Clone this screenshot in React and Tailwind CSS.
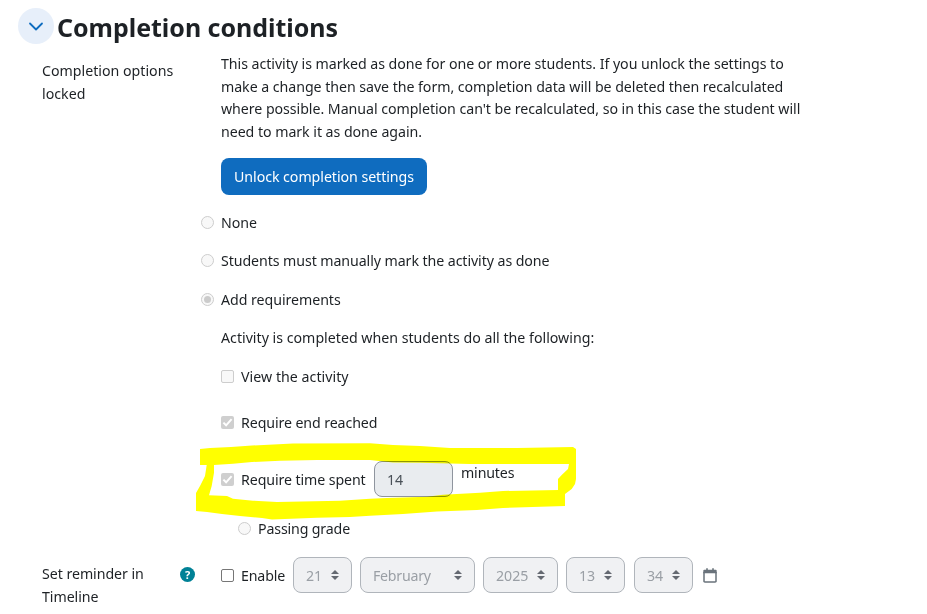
import React from 'react';

const dateSelects = [
  { label: '21', width: 'w-[59px]', space: 'mr-2' },
  { label: 'February', width: 'w-[115px]', space: 'mr-2', tight: true },
  { label: '2025', width: 'w-[75px]', space: 'mr-2' },
  { label: '13', width: 'w-[59px]', space: 'mr-[9px]' },
  { label: '34', width: 'w-[59px]', space: 'mr-2.5' },
];

const Radio = ({ checked }) => (
  <span className="w-[13px] h-[13px] shrink-0 rounded-full border border-[#cdcdcd] bg-[#f8f8f8] flex items-center justify-center">
    {checked && <span className="w-[7px] h-[7px] rounded-full bg-[#cbcbcb]" />}
  </span>
);

const Checkbox = ({ checked, enabled }) => {
  if (checked) {
    return (
      <span className="w-[13px] h-[13px] shrink-0 rounded-xs bg-[#cfcfcf]">
        <svg viewBox="0 0 13 13" className="w-full h-full" fill="none" stroke="#fff" strokeWidth="2">
          <path d="M2.4 6.6 5.1 9.3 10.6 3.2" />
        </svg>
      </span>
    );
  }
  return (
    <span
      className={`w-[13px] h-[13px] shrink-0 rounded-xs border ${
        enabled ? 'border-[#767676] bg-white' : 'border-[#cdcdcd] bg-[#f8f8f8]'
      }`}
    />
  );
};

const Select = ({ label, width, space, tight }) => (
  <div
    className={`${width} ${space} h-9 shrink-0 rounded-lg border border-[#b0b5bb] bg-[#f0f1f3] pl-3 pr-3 flex items-center justify-between text-[#9a9fa5]`}
  >
    <span className={tight ? 'pt-0.5 tracking-[-0.25px]' : 'pt-0.5'}>{label}</span>
    <svg width="8" height="10" viewBox="0 0 8 10" fill="#646971">
      <path d="M4 0 8 4H0zM4 10 0 6h8z" />
    </svg>
  </div>
);

// Freehand highlighter stroke around the time spent row
const Marker = () => (
  <svg
    className="absolute left-0 top-0 mix-blend-multiply pointer-events-none"
    width="927"
    height="614"
    viewBox="0 0 927 614"
    fill="#ffff00"
    fillRule="evenodd"
  >
    <path
      d="M200 449 210 448 231 447 252 445.5 293 443.5 370 443.3 393 445 420 446 450 448 517 448 573 447 576 449 576 479 575 484 571.7 489 565 494 565 506 503 508 477 510 437 511.5 403 514 370 515.7 350 517 317 517.7 272 519.5 262 518 240 516 222 514 207 512 196 511 196 493 200 486 205 476 206.7 465 200 465Z
      M214 465 233 463.7 252 462 280 460.7 317 460 370 460 393 462.5 420 462.7 470 464 569 464 568 469 561.7 475 558 479 558 490 503 491 480 492.7 443 494.7 427 496.7 387 498 370 498.7 340 500.7 277 502 253 500.7 233 498.7 227 496 209 495.3 211.7 486 214 472.7Z"
    />
  </svg>
);

const App = () => {
  return (
    <div className="relative w-[927px] h-[614px] overflow-hidden bg-white font-['Noto_Sans','Open_Sans',sans-serif] text-[14.2px] leading-[22.6px] tracking-[-0.05px] text-[#1d2125] whitespace-nowrap">
      {/* Section header */}
      <div className="flex items-center pt-2 pl-[18px]">
        <span className="w-9 h-9 rounded-full bg-[#e7effa] flex items-center justify-center">
          <svg width="16" height="10" viewBox="0 0 16 10" className="mt-0.5" fill="none" stroke="#0f6cbf" strokeWidth="1.8" strokeLinecap="round" strokeLinejoin="round">
            <path d="M2 1.5 8 7.5 14 1.5" />
          </svg>
        </span>
        <h3 className="ml-[3px] mt-0.5 text-[25px] leading-8 font-bold tracking-[-0.03px]">Completion conditions</h3>
      </div>

      {/* Locked completion options */}
      <div className="flex pl-[42px] pt-[9px]">
        <div className="w-[179px] shrink-0 pt-[7px] tracking-normal">
          Completion options
          <br />
          locked
        </div>
        <div>
          <p>
            This activity is marked as done for one or more students. If you unlock the settings to
            <br />
            make a change then save the form, completion data will be deleted then recalculated
            <br />
            where possible. Manual completion can't be recalculated, so in this case the student will
            <br />
            need to mark it as done again.
          </p>
          <button className="mt-[15px] h-[37px] w-[206px] rounded-lg bg-[#0f6cbf] text-white">
            Unlock completion settings
          </button>
        </div>
      </div>

      {/* Completion rules */}
      <div className="pl-[201px] pt-2">
        <div className="h-[38px] flex items-center gap-[7px]">
          <Radio />
          <span className="pt-0.5">None</span>
        </div>
        <div className="h-[39px] flex items-center gap-[7px]">
          <Radio />
          <span className="tracking-[-0.08px]">Students must manually mark the activity as done</span>
        </div>
        <div className="h-[38px] flex items-center gap-[7px]">
          <Radio checked />
          <span className="pt-0.5">Add requirements</span>
        </div>
        <div className="h-[39px] flex items-center pl-5 tracking-normal">
          Activity is completed when students do all the following:
        </div>
        <div className="h-[39px] flex items-center gap-[7px] pl-5">
          <Checkbox />
          <span className="tracking-[0.03px]">View the activity</span>
        </div>
        <div className="h-[53px] flex items-center gap-[7px] pl-5">
          <Checkbox checked />
          <span className="tracking-[-0.1px]">Require end reached</span>
        </div>
        <div className="h-[60px] flex items-center pl-5">
          <Checkbox checked />
          <span className="ml-[7px] w-[133px] pt-0.5 tracking-[-0.1px]">Require time spent</span>
          <div className="w-[79px] h-9 rounded-lg border border-[#8f959e] bg-[#e9ecef] pl-3 pt-0.5 flex items-center text-[#495057]">
            14
          </div>
          <span className="ml-2 mb-3 tracking-[-0.15px]">minutes</span>
        </div>
        <div className="h-[38px] flex items-center gap-[7px] pl-[37px]">
          <Radio />
          <span className="pt-0.5 tracking-[-0.15px]">Passing grade</span>
        </div>
      </div>

      {/* Timeline reminder */}
      <div className="flex pl-[42px] pt-2.5">
        <div className="w-[138px] pt-1.5">
          Set reminder in
          <br />
          Timeline
        </div>
        <div className="w-[41px] pt-2.5">
          <span className="w-[15px] h-[15px] rounded-full bg-[#008196] text-white font-bold text-[11px] flex items-center justify-center">
            ?
          </span>
        </div>
        <div className="h-9 flex items-center">
          <Checkbox enabled />
          <span className="ml-[7px] w-[52px] pt-0.5 tracking-[-0.15px]">Enable</span>
          {dateSelects.map((item) => (
            <Select key={item.label} {...item} />
          ))}
          <svg width="14" height="15" viewBox="0 0 14 15" fill="none" stroke="#6a737b" strokeWidth="1.5">
            <path d="M1 4V13.2a.9.9 0 0 0 .9.9H12.1a.9.9 0 0 0 .9-.9V4" />
            <path d="M.3 5.3V2.8a1 1 0 0 1 1-1H12.7a1 1 0 0 1 1 1V5.3Z" fill="#6a737b" stroke="none" />
            <path d="M4 .2V2.5M10 .2V2.5" strokeWidth="1.6" />
          </svg>
        </div>
      </div>

      <Marker />
    </div>
  );
};

export default App;
